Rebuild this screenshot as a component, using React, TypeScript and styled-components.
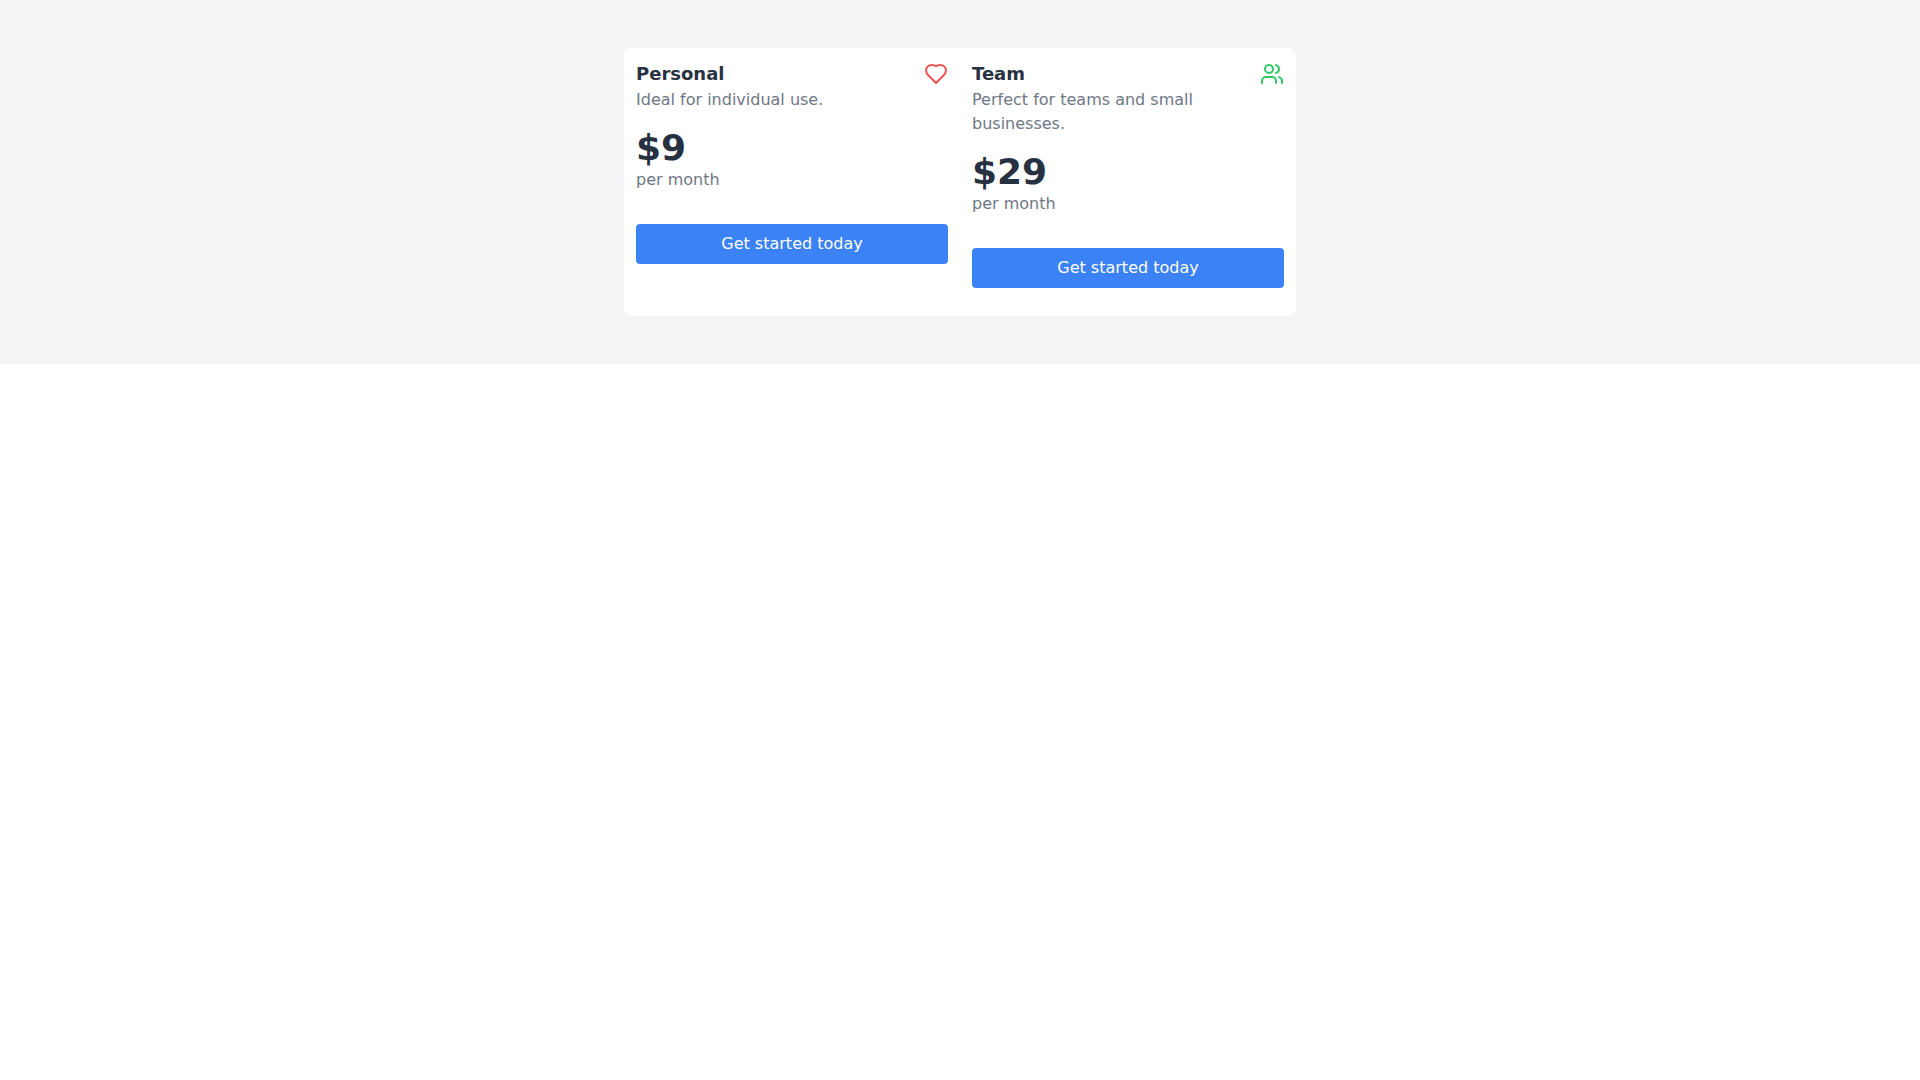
import React from "react";
import styled, { createGlobalStyle } from "styled-components";

const GlobalStyle = createGlobalStyle`
  *, *::before, *::after {
    box-sizing: border-box;
  }
  body {
    margin: 0;
    background: #ffffff;
    font-family: "DejaVu Sans", sans-serif;
    font-size: 16px;
    line-height: 24px;
  }
`;

const Section = styled.main`
  padding: 48px 16px;
  background: #f3f4f6;
`;

const Panel = styled.div`
  display: grid;
  grid-template-columns: repeat(2, minmax(0, 1fr));
  max-width: 672px;
  margin: 0 auto;
  border-radius: 8px;
  background: #ffffff;

  @media (max-width: 560px) {
    grid-template-columns: minmax(0, 1fr);
  }
`;

const Plan = styled.section`
  padding: 12px 12px 28px;
`;

const PlanHeader = styled.header`
  display: flex;
  align-items: center;
  justify-content: space-between;
`;

const PlanName = styled.h2`
  margin: 0;
  color: #283141;
  font-size: 18px;
  font-weight: 700;
  line-height: 28px;
`;

const Icon = styled.svg<{ $color: string }>`
  flex: none;
  width: 24px;
  height: 24px;
  fill: none;
  stroke: ${({ $color }) => $color};
  stroke-width: 2;
  stroke-linecap: round;
  stroke-linejoin: round;
`;

const Muted = styled.p`
  margin: 0;
  color: #6f7786;
`;

const Price = styled.p`
  margin: 16px 0 0;
  color: #283141;
  font-size: 36px;
  font-weight: 700;
  line-height: 40px;
`;

const StartButton = styled.button`
  display: block;
  width: 100%;
  margin: 32px 0 0;
  padding: 8px 16px;
  border: 0;
  border-radius: 4px;
  background: #3b82f6;
  color: #ffffff;
  font: inherit;
  cursor: pointer;

  &:hover {
    background: #2563eb;
  }
`;

const HeartIcon = () => (
  <Icon $color="#f05252" viewBox="0 0 24 24" aria-hidden="true">
    <path d="M19 14c1.49-1.46 3-3.21 3-5.5A5.5 5.5 0 0 0 16.5 3c-1.76 0-3.2.1-4.5 1.3C10.7 3.1 9.26 3 7.5 3A5.5 5.5 0 0 0 2 8.5c0 2.3 1.5 4.05 3 5.5l7 7Z" />
  </Icon>
);

const UsersIcon = () => (
  <Icon $color="#30c768" viewBox="0 0 24 24" aria-hidden="true">
    <path d="M16 21v-2a4 4 0 0 0-4-4H6a4 4 0 0 0-4 4v2" />
    <circle cx="9" cy="7" r="4" />
    <path d="M22 21v-2a4 4 0 0 0-3-3.87" />
    <path d="M16 3.13a4 4 0 0 1 0 7.75" />
  </Icon>
);

const plans = [
  {
    name: "Personal",
    description: "Ideal for individual use.",
    price: "$9",
    icon: <HeartIcon />,
  },
  {
    name: "Team",
    description: "Perfect for teams and small businesses.",
    price: "$29",
    icon: <UsersIcon />,
  },
];

export default function App() {
  return (
    <>
      <GlobalStyle />
      <Section>
        <Panel>
          {plans.map((plan) => (
            <Plan key={plan.name}>
              <PlanHeader>
                <PlanName>{plan.name}</PlanName>
                {plan.icon}
              </PlanHeader>
              <Muted>{plan.description}</Muted>
              <Price>{plan.price}</Price>
              <Muted>per month</Muted>
              <StartButton type="button">Get started today</StartButton>
            </Plan>
          ))}
        </Panel>
      </Section>
    </>
  );
}
